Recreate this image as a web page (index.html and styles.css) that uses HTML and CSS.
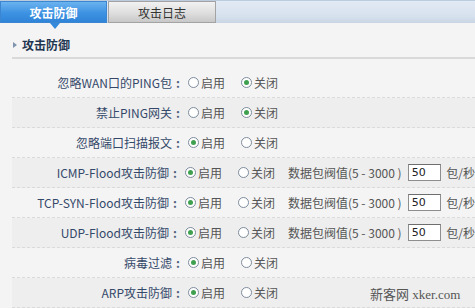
FILE: index.html
```html
<!DOCTYPE html>
<html>
<head>
<meta charset="utf-8">
<link rel="stylesheet" href="styles.css">
</head>
<body>
<div class="tabbar">
  <div class="tab tab-active">攻击防御<span class="tab-arrow"></span></div>
  <div class="tab tab-normal">攻击日志</div>
</div>
<div class="panel">
  <div class="sec-title"><span class="sec-tri"></span>攻击防御</div>
  <div class="rows">
    <div class="row">
      <div class="label">忽略WAN口的PING包<span class="colon">:</span></div>
      <span class="radio"></span><span class="opt">启用</span>
      <span class="radio on"></span><span class="opt">关闭</span>
    </div>
    <div class="row alt">
      <div class="label">禁止PING网关<span class="colon">:</span></div>
      <span class="radio"></span><span class="opt">启用</span>
      <span class="radio on"></span><span class="opt">关闭</span>
    </div>
    <div class="row">
      <div class="label">忽略端口扫描报文<span class="colon">:</span></div>
      <span class="radio on"></span><span class="opt">启用</span>
      <span class="radio"></span><span class="opt">关闭</span>
    </div>
    <div class="row alt">
      <div class="label">ICMP-Flood攻击防御<span class="colon">:</span></div>
      <span class="radio on"></span><span class="opt">启用</span>
      <span class="radio"></span><span class="opt">关闭</span>
      <span class="thr">数据包阀值(5 - 3000 )</span><span class="inp">50</span><span class="unit">包/秒</span>
    </div>
    <div class="row">
      <div class="label">TCP-SYN-Flood攻击防御<span class="colon">:</span></div>
      <span class="radio on"></span><span class="opt">启用</span>
      <span class="radio"></span><span class="opt">关闭</span>
      <span class="thr">数据包阀值(5 - 3000 )</span><span class="inp">50</span><span class="unit">包/秒</span>
    </div>
    <div class="row alt">
      <div class="label">UDP-Flood攻击防御<span class="colon">:</span></div>
      <span class="radio on"></span><span class="opt">启用</span>
      <span class="radio"></span><span class="opt">关闭</span>
      <span class="thr">数据包阀值(5 - 3000 )</span><span class="inp">50</span><span class="unit">包/秒</span>
    </div>
    <div class="row">
      <div class="label">病毒过滤<span class="colon">:</span></div>
      <span class="radio on"></span><span class="opt">启用</span>
      <span class="radio"></span><span class="opt">关闭</span>
    </div>
    <div class="row alt">
      <div class="label">ARP攻击防御<span class="colon">:</span></div>
      <span class="radio on"></span><span class="opt">启用</span>
      <span class="radio"></span><span class="opt">关闭</span>
    </div>
  </div>
</div>
<div class="watermark">新客网 xker.com</div>
</body>
</html>
```
FILE: styles.css
```css
html, body {
  margin: 0;
  padding: 0;
}
body {
  background: #f4f4f4;
  font-family: "Noto Sans CJK SC", "Noto Sans", sans-serif;
  font-size: 12px;
  color: #555;
  width: 475px;
  height: 308px;
  overflow: hidden;
  position: relative;
}
.tabbar {
  height: 22px;
  border-top: 1px solid #bccbdd;
  background: linear-gradient(#e2eaf4, #d6e1ee 70%, #c9d5e3);
  display: flex;
  align-items: stretch;
}
.tab {
  height: 22px;
  line-height: 21px;
  text-align: center;
  box-sizing: border-box;
  position: relative;
}
.tab-active {
  width: 107px;
  color: #fff;
  font-weight: bold;
  background: linear-gradient(#6bb3f0, #3d92e2 55%, #2f84d8);
  border: 1px solid #3a86d0;
}
.tab-arrow {
  position: absolute;
  left: 49px;
  top: 21px;
  width: 0;
  height: 0;
  border-left: 5px solid transparent;
  border-right: 5px solid transparent;
  border-top: 6px solid #3389db;
}
.tab-normal {
  width: 108px;
  margin-left: 1px;
  color: #333;
  background: linear-gradient(#f2f2f2, #dedede 55%, #c8c8c8);
  border: 1px solid #a3a3a3;
}
.panel {
  padding-left: 12px;
}
.sec-title {
  margin-top: 14px;
  height: 16px;
  line-height: 16px;
  padding-bottom: 4px;
  border-bottom: 2px solid #d9d9d9;
  font-weight: bold;
  color: #1e3550;
  display: flex;
  align-items: center;
}
.sec-tri {
  width: 0;
  height: 0;
  border-top: 3px solid transparent;
  border-bottom: 3px solid transparent;
  border-left: 4px solid #7f95ad;
  margin: 0 5px 0 1px;
}
.rows {
  margin-top: 9px;
}
.row {
  height: 29px;
  border-bottom: 1px dashed #dadada;
  display: flex;
  align-items: center;
}
.row.alt {
  background: #eeeeee;
}
.label {
  width: 172px;
  text-align: right;
  color: #34496a;
  white-space: nowrap;
  margin-right: 4px;
}
.colon {
  display: inline-block;
  width: 12px;
  text-align: center;
  font-weight: bold;
  color: #50627e;
}
.radio {
  width: 9px;
  height: 9px;
  border: 1px solid #7d8c9c;
  border-radius: 50%;
  background: #fff;
  position: relative;
  flex: none;
}
.radio.on::after {
  content: "";
  position: absolute;
  left: 2px;
  top: 2px;
  width: 5px;
  height: 5px;
  border-radius: 50%;
  background: #3fa04f;
}
.opt {
  margin-left: 2px;
  margin-right: 16px;
  color: #555;
  white-space: nowrap;
}
.opt + .radio + .opt {
  margin-right: 13px;
}
.thr {
  color: #555;
  white-space: nowrap;
  width: 122px;
}
.inp {
  width: 29px;
  height: 15px;
  line-height: 15px;
  border: 1px solid #8e8e8e;
  border-top-color: #6e6e6e;
  background: #fff;
  color: #222;
  padding-left: 3px;
  box-sizing: content-box;
  font-size: 11px;
  font-family: "DejaVu Sans", sans-serif;
  margin-right: 5px;
}
.unit {
  white-space: nowrap;
  color: #555;
}
.watermark {
  position: absolute;
  left: 370px;
  top: 284px;
  font-family: "Liberation Serif", "Noto Sans CJK SC", serif;
  font-size: 13px;
  color: #555;
  white-space: nowrap;
}
```
